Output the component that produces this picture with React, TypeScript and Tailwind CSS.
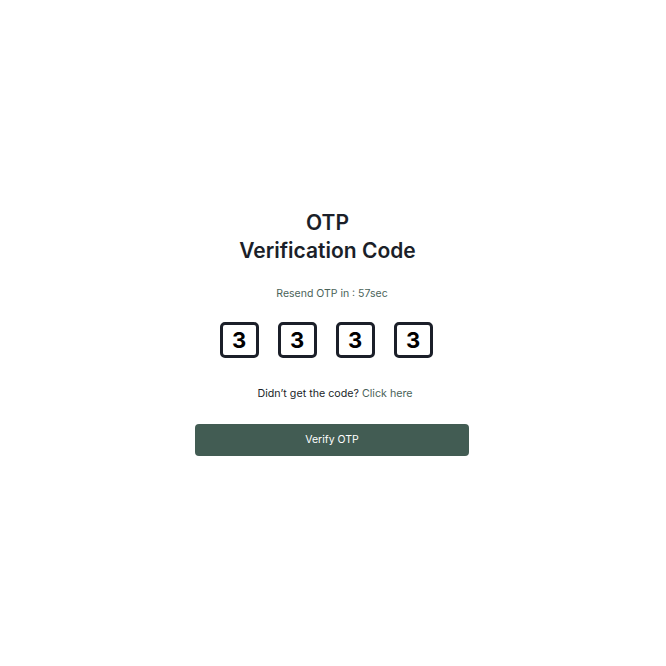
export default function App() {
    const digits = ["3", "3", "3", "3"];

    return (
        <div
            className="min-h-screen w-full bg-white flex items-center justify-center"
            style={{ fontFamily: "Inter, 'Noto Sans', sans-serif" }}
        >
            <div className="flex flex-col items-center w-[274px] ml-[-2px] mt-[-1px]">
                {/* Heading */}
                <h1 className="text-[21px] leading-[28px] font-semibold text-[#1b1f29] text-center mr-[9px]">
                    OTP
                    <br />
                    Verification Code
                </h1>

                <p className="mt-[22px] text-[10.5px] leading-[14px] text-[#4b6359]">
                    Resend OTP in : 57sec
                </p>

                {/* Code boxes */}
                <div className="mt-[21px] flex gap-[19px] mr-[12px]">
                    {digits.map((d, i) => (
                        <div
                            key={i}
                            className="w-[39px] h-[36px] border-[3px] border-[#1b1f29] rounded-[5px] flex items-center justify-center text-[22px] font-bold text-black"
                        >
                            {d}
                        </div>
                    ))}
                </div>

                <p className="mt-[29px] text-[10.7px] leading-[14px] text-[#1b1f29] ml-[6px]">
                    Didn’t get the code? <span className="text-[#4b6359]">Click here</span>
                </p>

                <button className="mt-[23px] w-[274px] h-[32px] rounded-[4px] bg-[#425c53] text-white text-[10.5px]">
                    Verify OTP
                </button>
            </div>
        </div>
    );
}
